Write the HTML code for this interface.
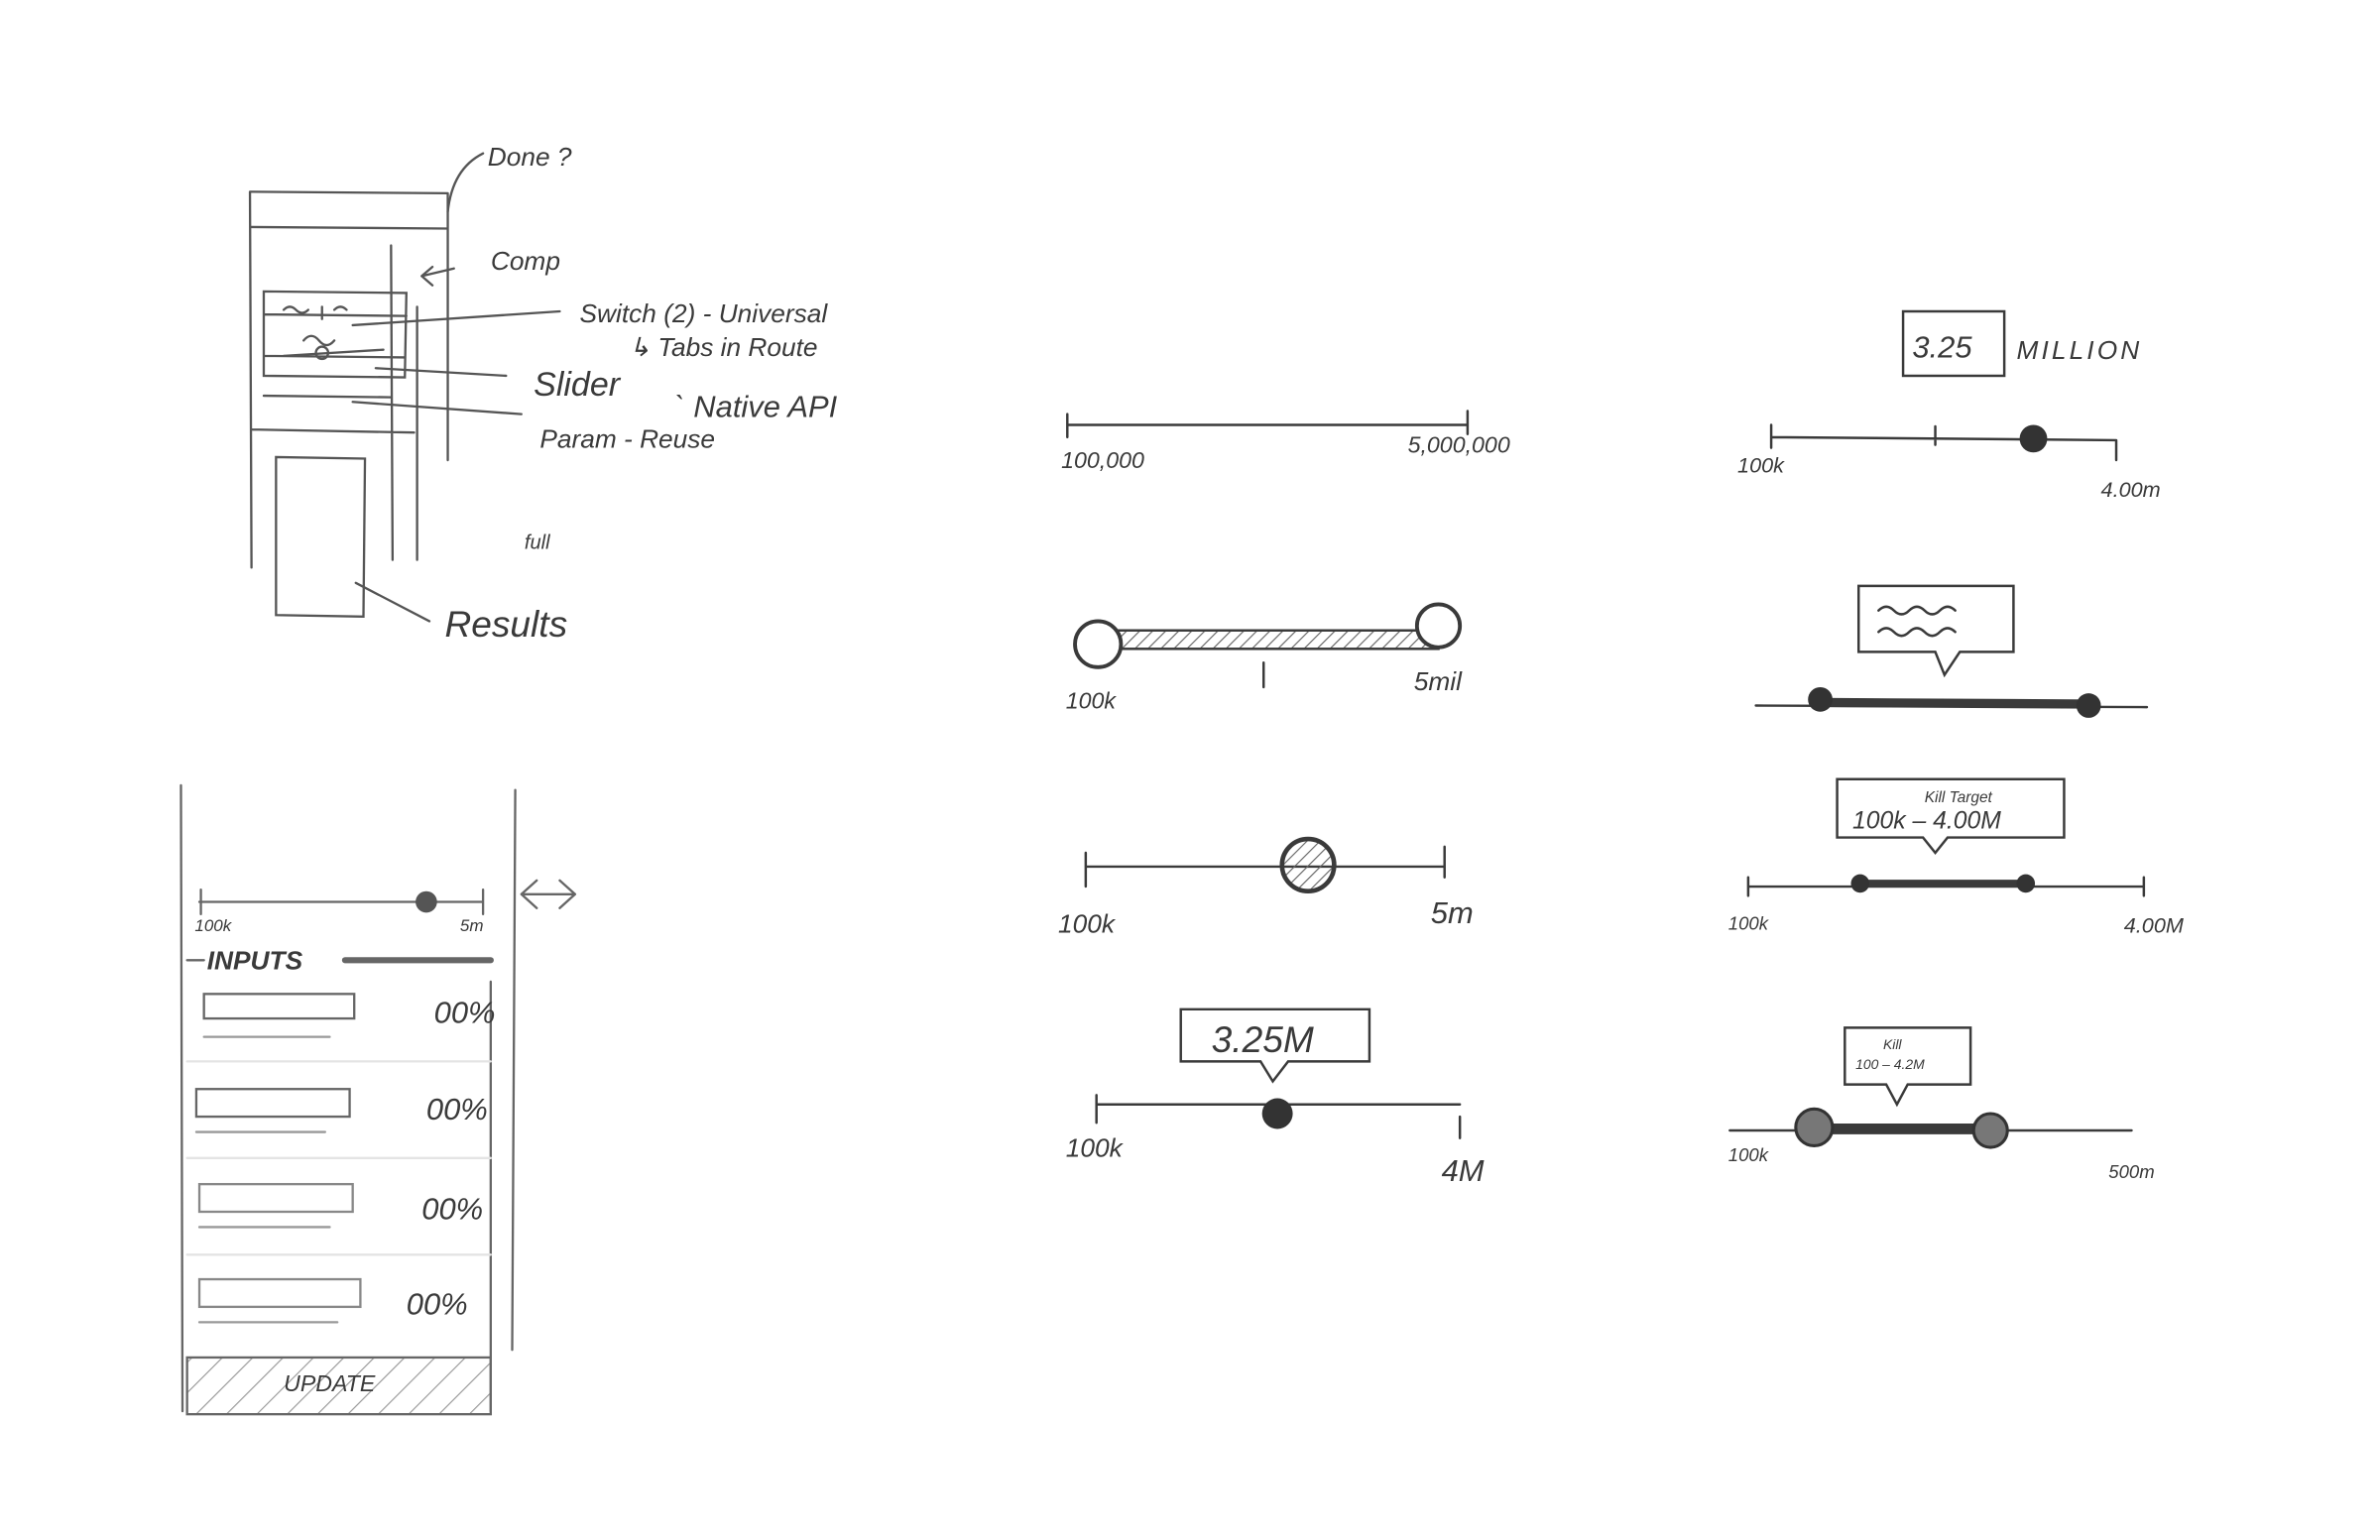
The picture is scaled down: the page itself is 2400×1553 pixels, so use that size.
<!DOCTYPE html>
<html><head><meta charset="utf-8"><style>
html,body{margin:0;padding:0;background:#fff;}
svg{display:block;}
text{font-family:"Liberation Sans",sans-serif;fill:#3a3a3a;font-style:italic;}
</style></head><body>
<svg width="2400" height="1553" viewBox="0 0 1552 1004" preserveAspectRatio="none" xmlns="http://www.w3.org/2000/svg">
<defs>
<pattern id="h" width="6" height="6" patternUnits="userSpaceOnUse" patternTransform="rotate(45)"><line x1="0" y1="0" x2="0" y2="6" stroke="#666" stroke-width="1.5"/></pattern>
<pattern id="h2" width="14" height="14" patternUnits="userSpaceOnUse" patternTransform="rotate(45)"><line x1="0" y1="0" x2="0" y2="14" stroke="#999" stroke-width="1.5"/></pattern>
</defs>
<rect width="1552" height="1004" fill="#fff"/>
<g stroke="#555" stroke-width="1.5" fill="none" stroke-linecap="round">
<path d="M163 125 L292 126 M163 125 L164 370 M292 126 L292 300 M164 148 L292 149 M255 160 L256 365 M272 200 L272 365 M164 280 L270 282"/>
<path d="M172 190 L265 191 L264 246 L172 245 Z M172 205 L265 206 M172 232 L264 233 M172 258 L255 259"/>
<path d="M180 298 L238 299 L237 402 L180 401 Z"/>
<path d="M230 212 L365 203 M245 240 L330 245 M230 262 L340 270 M232 380 L280 405"/>
<path d="M296 175 L275 180 M275 180 L282 174 M275 180 L282 186 M292 138 Q295 110 315 100"/>
<path d="M185 202 q4 -4 8 0 q4 4 8 0 M210 200 L210 208 M218 202 q4 -4 8 0 M198 222 q5 -6 10 0 q5 6 10 0 M185 232 L250 228"/>
<circle cx="210" cy="230" r="4"/>
</g>
<g font-size="17">
<text x="318" y="108">Done ?</text>
<text x="320" y="176">Comp</text>
<text x="378" y="210">Switch (2) - Universal</text>
<text x="410" y="232">↳ Tabs in Route</text>
<text x="348" y="258" font-size="22">Slider</text>
<text x="440" y="272" font-size="20">` Native API</text>
<text x="352" y="292">Param  - Reuse</text>
<text x="342" y="358" font-size="13" fill="#888">full</text>
<text x="290" y="415" font-size="24">Results</text>
</g>

<g stroke="#666" stroke-width="1.5" fill="none" stroke-linecap="round">
<path d="M118 512 L119 920 M336 515 L334 880 M320 640 L320 920"/>
<rect x="122" y="885" width="198" height="37" fill="url(#h2)"/>
<path d="M130 588 L315 588 M131 580 L131 596 M315 580 L315 596"/>
<path d="M340 583 L375 583 M340 583 L350 574 M340 583 L350 592 M375 583 L365 574 M375 583 L365 592"/>
<path d="M122 626 L133 626"/>
<path d="M225 626 L320 626" stroke-width="4"/>
<rect x="133" y="648" width="98" height="16"/>
<rect x="128" y="710" width="100" height="18"/>
<rect x="130" y="772" width="100" height="18" stroke="#888"/>
<rect x="130" y="834" width="105" height="18" stroke="#888"/>
<path d="M133 676 L215 676 M128 738 L212 738 M130 800 L215 800 M130 862 L220 862" stroke="#999"/>
<path d="M122 692 L320 692 M122 755 L320 755 M122 818 L320 818" stroke="#e4e4e4"/>
</g>
<circle cx="278" cy="588" r="7" fill="#555"/>
<g font-size="11"><text x="127" y="607">100k</text><text x="300" y="607">5m</text></g>
<text x="135" y="632" font-size="17" font-style="normal" font-weight="bold">INPUTS</text>
<g font-size="20" fill="#666"><text x="283" y="667">00%</text><text x="278" y="730">00%</text><text x="275" y="795">00%</text><text x="265" y="857">00%</text></g>
<text x="185" y="907" font-size="15" font-style="normal" fill="#555">UPDATE</text>

<g stroke="#3a3a3a" stroke-width="1.6" fill="none" stroke-linecap="round">
<path d="M696 277 L957 277 M696 270 L696 285 M957 268 L957 283"/>
<rect x="716" y="411" width="222" height="12" fill="url(#h)"/>
<path d="M824 432 L824 448"/>
<circle cx="716" cy="420" r="15" fill="#fff" stroke-width="2.5"/>
<circle cx="938" cy="408" r="14" fill="#fff" stroke-width="2.5"/>
<path d="M708 565 L942 565 M708 556 L708 578 M942 552 L942 572"/>
<circle cx="853" cy="564" r="17" fill="url(#h)" stroke-width="3"/>
<path d="M770 658 L893 658 L893 692 L840 692 L830 705 L822 692 L770 692 Z" fill="#fff"/>
<path d="M715 720 L952 720 M715 714 L715 732 M952 728 L952 742"/>
</g>
<circle cx="833" cy="726" r="10" fill="#333"/>
<g font-size="15"><text x="692" y="305">100,000</text><text x="918" y="295">5,000,000</text>
<text x="695" y="462">100k</text><text x="922" y="450" font-size="17">5mil</text>
<text x="690" y="608" font-size="17">100k</text><text x="933" y="602" font-size="20">5m</text>
<text x="695" y="754" font-size="17">100k</text><text x="940" y="770" font-size="20">4M</text></g>
<text x="790" y="686" font-size="24" font-style="normal">3.25M</text>

<g stroke="#3a3a3a" stroke-width="1.6" fill="none" stroke-linecap="round">
<rect x="1241" y="203" width="66" height="42"/>
<path d="M1155 285 L1380 287 M1155 277 L1155 292 M1262 278 L1262 290 M1380 287 L1380 300"/>
<path d="M1212 382 L1313 382 L1313 425 L1278 425 L1268 440 L1262 425 L1212 425 Z"/>
<path d="M1225 398 q5 -5 10 0 q5 5 10 0 q5 -5 10 0 q5 5 10 0 q5 -5 10 0 M1225 412 q5 -5 10 0 q5 5 10 0 q5 -5 10 0 q5 5 10 0 q5 -5 10 0"/>
<path d="M1145 460 L1400 461"/>
<path d="M1187 458 L1362 459" stroke-width="6"/>
<path d="M1198 508 L1346 508 L1346 546 L1270 546 L1262 556 L1254 546 L1198 546 Z"/>
<path d="M1140 578 L1398 578 M1140 572 L1140 584 M1398 572 L1398 584"/>
<path d="M1213 576 L1321 576" stroke-width="5"/>
<path d="M1203 670 L1285 670 L1285 707 L1244 707 L1237 720 L1230 707 L1203 707 Z"/>
<path d="M1128 737 L1390 737"/>
<path d="M1183 736 L1298 736" stroke-width="7"/>
</g>
<g fill="#333"><circle cx="1326" cy="286" r="9"/><circle cx="1187" cy="456" r="8"/><circle cx="1362" cy="460" r="8"/><circle cx="1213" cy="576" r="6"/><circle cx="1321" cy="576" r="6"/></g>
<g fill="#777" stroke="#333" stroke-width="2"><circle cx="1183" cy="735" r="12"/><circle cx="1298" cy="737" r="11"/></g>
<text x="1247" y="233" font-size="20" font-style="normal">3.25</text>
<text x="1315" y="234" font-size="17" font-style="normal" letter-spacing="2">MILLION</text>
<g font-size="14"><text x="1133" y="308">100k</text><text x="1370" y="324">4.00m</text>
<text x="1127" y="606" font-size="12">100k</text><text x="1385" y="608">4.00M</text>
<text x="1127" y="757" font-size="12">100k</text><text x="1375" y="768" font-size="12">500m</text></g>
<text x="1255" y="523" font-size="10">Kill Target</text>
<text x="1208" y="540" font-size="16" font-style="normal">100k – 4.00M</text>
<text x="1228" y="684" font-size="9">Kill</text>
<text x="1210" y="697" font-size="9">100 – 4.2M</text>
</svg>
</body></html>
